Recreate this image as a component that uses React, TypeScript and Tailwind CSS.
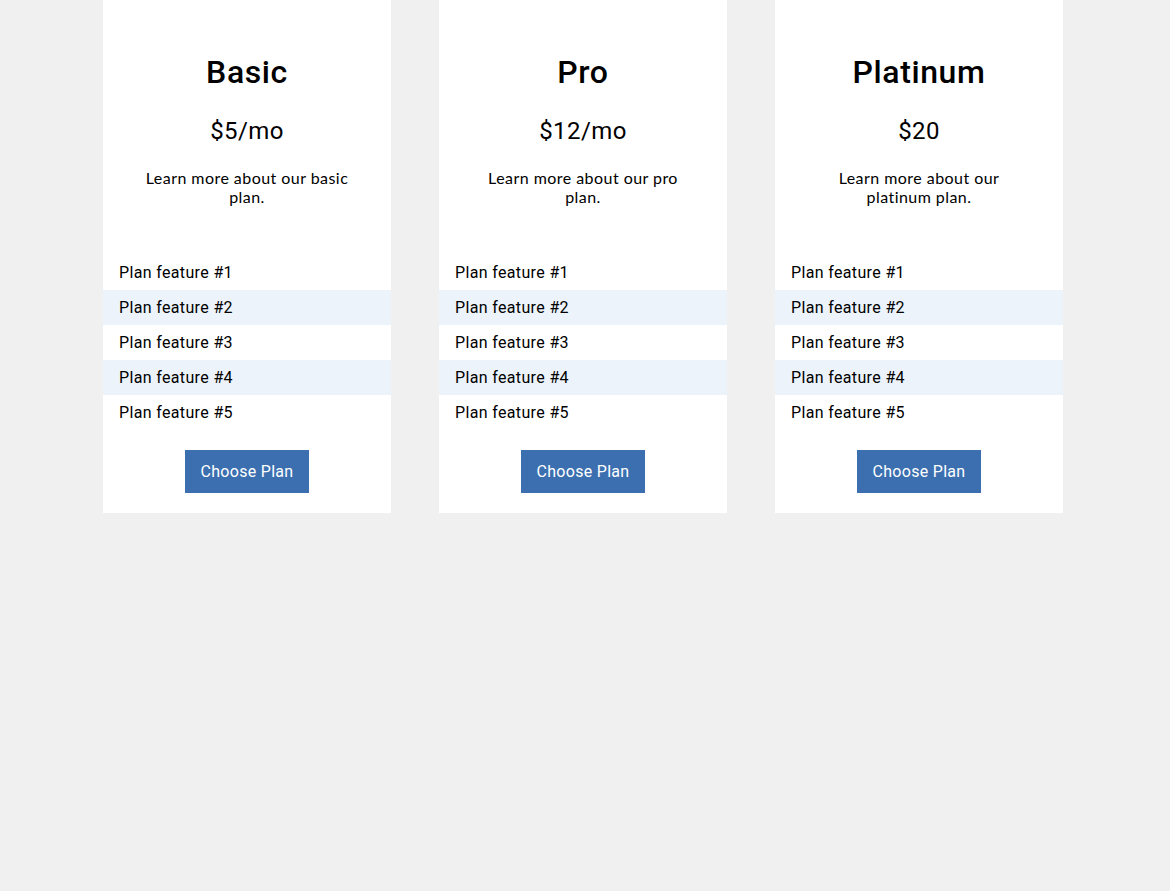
type Plan = {
  name: string;
  price: string;
  blurb: string;
};

const plans: Plan[] = [
  { name: "Basic", price: "$5/mo", blurb: "Learn more about our basic plan." },
  { name: "Pro", price: "$12/mo", blurb: "Learn more about our pro plan." },
  { name: "Platinum", price: "$20", blurb: "Learn more about our platinum plan." },
];

const features = ["Plan feature #1", "Plan feature #2", "Plan feature #3", "Plan feature #4", "Plan feature #5"];

const PlanCard: React.FC<{ plan: Plan }> = ({ plan }) => {
  return (
    <div className="w-[288px] bg-white flex flex-col items-center pt-[53px] pb-[20px]">
      <h2 className="text-[32px] leading-[38px] font-medium tracking-[0.6px] text-black font-['Roboto',sans-serif]">
        {plan.name}
      </h2>
      <p className="mt-[26px] text-[24px] leading-[28px] tracking-[0.4px] text-black font-['Roboto',sans-serif]">
        {plan.price}
      </p>
      <p className="mt-[23px] w-[214px] text-center text-[16px] leading-[19px] tracking-[0.45px] text-black font-['Lato',sans-serif]">
        {plan.blurb}
      </p>
      <ul className="mt-[49px] w-full">
        {features.map((f, i) => (
          <li
            key={f}
            className={`h-[35px] flex items-center px-4 text-[16px] tracking-[0.35px] text-black font-['Roboto',sans-serif] ${
              i % 2 === 1 ? "bg-[#ecf3fa]" : "bg-white"
            }`}
          >
            {f}
          </li>
        ))}
      </ul>
      <button className="mt-[20px] w-[124px] h-[43px] bg-[#3b6fb0] text-white text-[16px] tracking-[0.3px] font-['Roboto',sans-serif]">
        Choose Plan
      </button>
    </div>
  );
};

export default function App() {
  return (
    <div className="min-h-[891px] bg-[#f0f0f0]">
      <div className="ml-[103px] flex gap-[48px] items-start">
        {plans.map((p) => (
          <PlanCard key={p.name} plan={p} />
        ))}
      </div>
    </div>
  );
}
